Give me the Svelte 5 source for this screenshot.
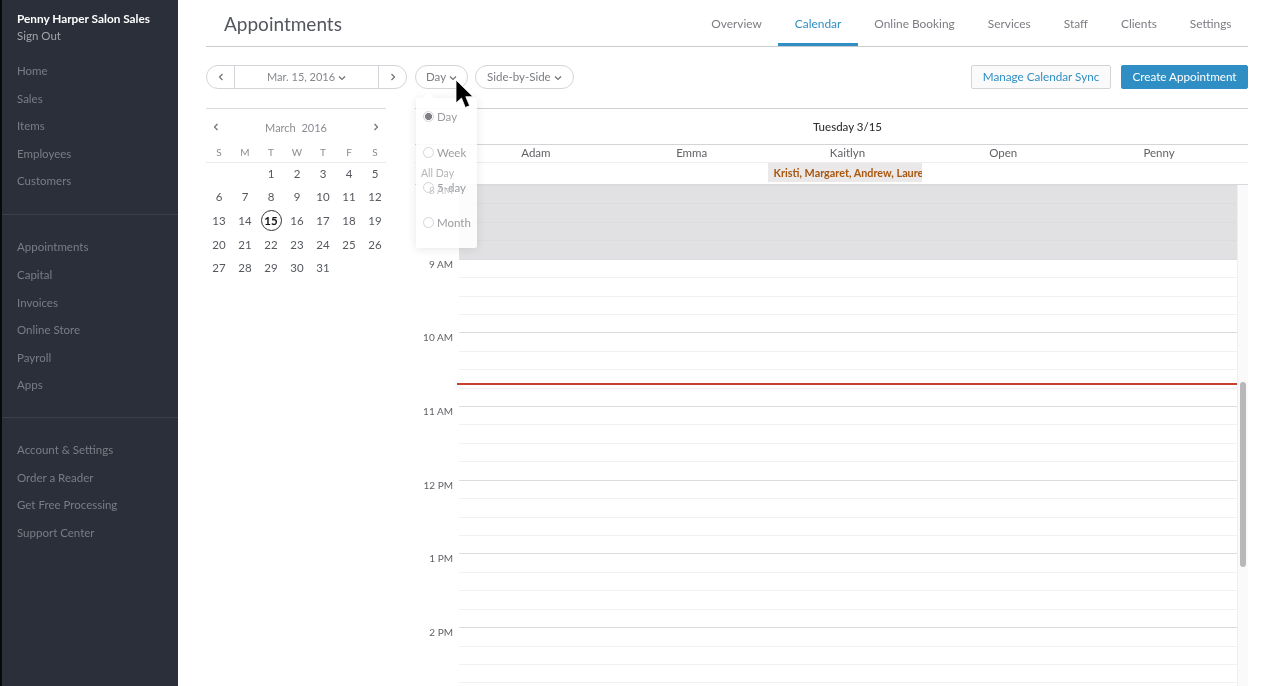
<script>
  const navGroups = [
    ["Home", "Sales", "Items", "Employees", "Customers"],
    ["Appointments", "Capital", "Invoices", "Online Store", "Payroll", "Apps"],
    ["Account & Settings", "Order a Reader", "Get Free Processing", "Support Center"],
  ];
  const tabs = ["Overview", "Calendar", "Online Booking", "Services", "Staff", "Clients", "Settings"];
  const weekdays = ["S", "M", "T", "W", "T", "F", "S"];
  // March 2016 starts on a Tuesday
  const days = [null, null, ...Array.from({ length: 31 }, (_, i) => i + 1)];
  const staff = ["Adam", "Emma", "Kaitlyn", "Open", "Penny"];
  const hours = ["8 AM", "9 AM", "10 AM", "11 AM", "12 PM", "1 PM", "2 PM"];
  const views = ["Day", "Week", "5-day", "Month"];
</script>

<div class="page">
  <aside class="sidebar">
    <div class="account">
      <strong>Penny Harper Salon Sales</strong>
      <span>Sign Out</span>
    </div>
    {#each navGroups as group, i}
      <nav class="group" class:ruled={i > 0}>
        {#each group as item}
          <span class="link">{item}</span>
        {/each}
      </nav>
    {/each}
  </aside>

  <main>
    <header>
      <h1>Appointments</h1>
      <div class="tabs">
        {#each tabs as tab}
          <span class="tab" class:active={tab === "Calendar"}>{tab}</span>
        {/each}
      </div>
    </header>

    <div class="toolbar">
      <div class="pager">
        <span class="step">
          <svg width="6" height="8" viewBox="0 0 6 8"><path d="M4.5 1 1.5 4l3 3" /></svg>
        </span>
        <span class="date">Mar. 15, 2016 <svg width="8" height="6" viewBox="0 0 8 6"><path d="M1 1.5l3 3 3-3" /></svg></span>
        <span class="step">
          <svg width="6" height="8" viewBox="0 0 6 8"><path d="M1.5 1l3 3-3 3" /></svg>
        </span>
      </div>
      <span class="pill day">Day <svg width="8" height="6" viewBox="0 0 8 6"><path d="M1 1.5l3 3 3-3" /></svg></span>
      <span class="pill side">Side-by-Side <svg width="8" height="6" viewBox="0 0 8 6"><path d="M1 1.5l3 3 3-3" /></svg></span>
      <span class="btn sync">Manage Calendar Sync</span>
      <span class="btn create">Create Appointment</span>
    </div>

    <div class="body">
      <section class="mini">
        <div class="mini-head">
          <svg width="6" height="8" viewBox="0 0 6 8"><path d="M4.5 1 1.5 4l3 3" /></svg>
          <span>March&nbsp; 2016</span>
          <svg width="6" height="8" viewBox="0 0 6 8"><path d="M1.5 1l3 3-3 3" /></svg>
        </div>
        <div class="weekdays">
          {#each weekdays as d}<span>{d}</span>{/each}
        </div>
        <div class="days">
          {#each days as d}
            <span class:today={d === 15}>{d ?? ""}</span>
          {/each}
        </div>
      </section>

      <section class="schedule">
        <div class="date-title">Tuesday 3/15</div>
        <div class="staff">
          {#each staff as name}<span>{name}</span>{/each}
        </div>
        <div class="allday">
          <span class="allday-label">All Day</span>
          <div class="allday-cols">
            <span></span><span></span>
            <span class="event"><b>Kristi, Margaret, Andrew, Laure</b></span>
            <span></span><span></span>
          </div>
        </div>
        <div class="grid">
          <div class="hours">
            {#each hours as hour, i}
              <div class="hour">
                <span class="hour-label">{hour}</span>
                <div class="slots" class:closed={i === 0}>
                  <i></i><i></i><i></i><i></i>
                </div>
              </div>
            {/each}
          </div>
          <div class="now"></div>
          <div class="track"><div class="thumb"></div></div>
        </div>

        <div class="popover">
          <div class="arrow"></div>
          {#each views as v, i}
            <div class="option">
              <span class="radio" class:on={i === 0}></span>{v}
            </div>
          {/each}
        </div>
      </section>
    </div>
  </main>

  <svg class="cursor" width="20" height="32" viewBox="0 0 20 32">
    <path d="M1 1v23l5.500-5 3.800 9.500 4.300-1.800-3.800-9h7.200z" fill="#000" stroke="#fff" stroke-width="0.8" />
  </svg>
</div>

<style>
  :global(body) {
    margin: 0;
    background: #fff;
  }

  .page {
    position: relative;
    display: flex;
    height: 686px;
    overflow: hidden;
    font-family: Lato, "Open Sans", sans-serif;
    font-size: 11.5px;
    color: #6f7177;
    filter: blur(0.35px);
  }

  .sidebar {
    box-sizing: border-box;
    width: 178px;
    flex: none;
    border-left: 2px solid #08090b;
    background: #2b2f39;
    padding-left: 15px;
    margin-right: 28px;
    color: #797d86;
  }
  .account {
    display: flex;
    flex-direction: column;
    gap: 4px;
    padding-top: 12px;
    line-height: 13px;
  }
  .account strong {
    color: #fff;
    font-weight: 700;
    font-size: 11.8px;
    white-space: nowrap;
  }
  .account span {
    color: #a2a5ab;
  }
  .group {
    display: flex;
    flex-direction: column;
    padding-top: 15px;
    padding-bottom: 19px;
  }
  .group.ruled {
    border-top: 1px solid #3b3f49;
    margin-left: -15px;
    padding-left: 15px;
    padding-top: 18.500px;
    padding-bottom: 18px;
  }
  .group.ruled:last-of-type {
    padding-top: 18px;
  }
  .link {
    height: 27.6px;
    line-height: 27.6px;
  }

  main {
    flex: 1;
    min-width: 0;
    margin-right: 31px;
    display: flex;
    flex-direction: column;
  }

  header {
    display: flex;
    justify-content: space-between;
    height: 46px;
    border-bottom: 1px solid #c9cacd;
  }
  h1 {
    margin: 0 0 0 18px;
    font-size: 19px;
    font-weight: 400;
    line-height: 48px;
    color: #53565c;
  }
  .tabs {
    display: flex;
    font-size: 11.9px;
  }
  .tab {
    padding: 0 16.5px;
    line-height: 47px;
    color: #7b7d82;
    white-space: nowrap;
  }
  .tab.active {
    color: #2f8fc4;
    box-shadow: inset 0 -3px 0 #2f8fc4;
  }

  .toolbar {
    display: flex;
    align-items: center;
    gap: 8px;
    height: 24px;
    margin-top: 18px;
  }
  .toolbar svg path,
  .mini-head svg path {
    fill: none;
    stroke: #6f7177;
    stroke-width: 1.2;
  }
  .pager {
    display: flex;
    width: 201px;
    height: 24px;
    box-sizing: border-box;
    border: 1px solid #d3d4d7;
    border-radius: 12px;
  }
  .step {
    width: 27px;
    display: flex;
    align-items: center;
    justify-content: center;
  }
  .date {
    flex: 1;
    border: solid #d3d4d7;
    border-width: 0 1px;
    text-align: center;
    line-height: 22px;
    font-size: 11px;
    color: #85878c;
  }
  .pill {
    height: 24px;
    box-sizing: border-box;
    border: 1px solid #d3d4d7;
    border-radius: 12px;
    padding: 0 10px;
    line-height: 22px;
    color: #7b7d82;
    white-space: nowrap;
  }
  .pill.day {
    width: 53px;
  }
  .pill.side {
    margin-left: -1px;
    width: 99px;
    padding: 0 11px;
  }
  .btn {
    height: 24px;
    box-sizing: border-box;
    border-radius: 2px;
    line-height: 21px;
    font-size: 11.7px;
    text-align: center;
    white-space: nowrap;
  }
  .sync {
    width: 140px;
    margin-left: auto;
    margin-right: 2px;
    border: 1px solid #d3d4d7;
    background: #fafafb;
    color: #2f8fc4;
  }
  .create {
    width: 127px;
    border: 1px solid #2f8fc4;
    background: #2f8fc4;
    color: #fff;
  }

  .body {
    display: flex;
    margin-top: 19px;
    gap: 29px;
    min-height: 0;
    flex: 1;
  }

  .mini {
    width: 180px;
    flex: none;
    border-top: 1px solid #d9d9dc;
    color: #55585e;
  }
  .mini-head {
    display: flex;
    align-items: center;
    justify-content: space-between;
    height: 36px;
    padding: 0 7px;
    font-size: 11px;
    color: #8a8c91;
  }
  .weekdays,
  .days {
    display: grid;
    grid-template-columns: repeat(7, 26px);
    text-align: center;
  }
  .weekdays {
    height: 17px;
    line-height: 14px;
    border-bottom: 1px solid #e9e9eb;
    font-size: 10px;
    color: #8a8c91;
  }
  .days {
    margin-top: -1.5px;
  }
  .days span {
    height: 23.7px;
    line-height: 23.7px;
    position: relative;
  }
  .days .today {
    font-weight: 700;
    color: #111;
  }
  .days .today::before {
    content: "";
    position: absolute;
    left: 50%;
    top: 50%;
    width: 19px;
    height: 19px;
    margin: -10.5px 0 0 -10.5px;
    border: 1px solid #333;
    border-radius: 50%;
  }

  .schedule {
    position: relative;
    flex: 1;
    min-width: 0;
    display: flex;
    flex-direction: column;
    border-top: 1px solid #cfd0d3;
  }
  .date-title {
    height: 35px;
    line-height: 35px;
    padding-left: 43px;
    text-align: center;
    padding-right: 11px;
    color: #333;
    font-weight: 500;
  }
  .staff {
    display: grid;
    grid-template-columns: repeat(5, 1fr);
    padding-right: 11px;
    padding-left: 43px;
    height: 17px;
    line-height: 16px;
    border-top: 1px solid #d3d4d7;
    border-bottom: 1px solid #eeeef0;
    text-align: center;
    color: #606266;
  }
  .allday {
    display: flex;
    height: 22px;
    border-bottom: 1px solid #d9d9dc;
    box-sizing: border-box;
  }
  .allday-label {
    position: relative;
    z-index: 3;
    width: 43px;
    flex: none;
    box-sizing: border-box;
    padding-left: 6px;
    line-height: 21px;
    font-size: 10.5px;
    color: #b5b6b9;
  }
  .allday-cols {
    flex: 1;
    display: grid;
    grid-template-columns: repeat(5, 1fr);
    margin-right: 11px;
  }
  .event {
    display: block;
    height: 19px;
    margin-left: -2px;
    margin-right: 3px;
    overflow: hidden;
    background: #eae8e8;
    padding-left: 6px;
    line-height: 20px;
    font-size: 10.8px;
    white-space: nowrap;
    color: #a9560f;
  }

  .grid {
    position: relative;
    flex: 1;
    overflow: hidden;
  }
  .hours {
    padding-right: 11px;
  }
  .hour {
    position: relative;
    height: 73.7px;
    padding-left: 44px;
  }
  .hour-label {
    position: absolute;
    right: calc(100% - 38px);
    top: -1px;
    white-space: nowrap;
    font-size: 10px;
    color: #606266;
  }
  .hour:first-child .hour-label {
    z-index: 3;
    color: #c4c5c8;
  }
  .slots {
    height: 100%;
  }
  .slots i {
    display: block;
    box-sizing: border-box;
    height: 25%;
    border-top: 1px solid #f2f2f3;
  }
  .slots i:first-child {
    border-top-color: #dcdcde;
  }
  .slots.closed {
    background: #e1e0e3;
  }
  .slots.closed i {
    border-top-color: #dcdbde;
  }
  .now {
    position: absolute;
    left: 42px;
    right: 11px;
    top: 198px;
    height: 1.500px;
    background: #c8402f;
  }
  .track {
    position: absolute;
    top: 0;
    right: 0;
    bottom: 0;
    width: 11px;
    background: #fafafa;
    border-left: 1px solid #efeff0;
    box-sizing: border-box;
  }
  .thumb {
    position: absolute;
    left: 2px;
    top: 197px;
    width: 6px;
    height: 185px;
    border-radius: 3px;
    background: #b8b8ba;
  }

  .popover {
    position: absolute;
    z-index: 2;
    left: 1px;
    top: -11px;
    width: 61px;
    height: 150px;
    box-sizing: border-box;
    padding-top: 1px;
    background: rgba(255, 255, 255, 0.88);
    border-radius: 2px;
    box-shadow: 0 1px 10px rgba(0, 0, 0, 0.1);
  }
  .arrow {
    position: absolute;
    left: 8px;
    top: -4px;
    width: 8px;
    height: 8px;
    background: #fff;
    transform: rotate(45deg);
  }
  .option {
    position: relative;
    display: flex;
    align-items: center;
    gap: 3px;
    height: 35.4px;
    padding-left: 7px;
    color: #9a9ca0;
    white-space: nowrap;
  }
  .radio {
    width: 9px;
    height: 9px;
    border: 1px solid #d3d4d7;
    border-radius: 50%;
    flex: none;
    background: #fff;
  }
  .radio.on {
    background: radial-gradient(circle, #808185 0 3.2px, #fff 3.8px);
  }

  .cursor {
    position: absolute;
    z-index: 5;
    left: 455px;
    top: 79px;
  }
</style>
